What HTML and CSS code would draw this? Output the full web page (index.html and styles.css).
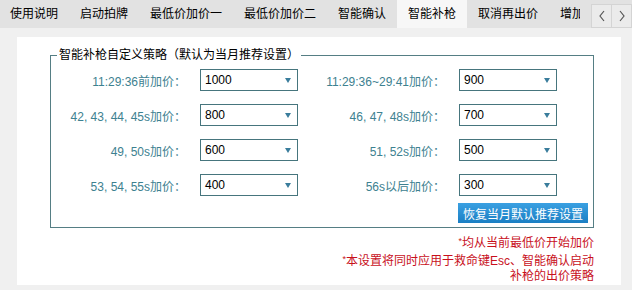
FILE: index.html
```html
<!DOCTYPE html>
<html lang="zh-CN">
<head>
  <meta charset="UTF-8" />
  <title>智能补枪</title>
  <link rel="stylesheet" href="styles.css">
</head>
<body>
  <div class="tabbar">
    <div class="tabs">
      <div class="tab">使用说明</div>
      <div class="tab">启动拍牌</div>
      <div class="tab">最低价加价一</div>
      <div class="tab">最低价加价二</div>
      <div class="tab">智能确认</div>
      <div class="tab active">智能补枪</div>
      <div class="tab">取消再出价</div>
      <div class="tab">增加出价</div>
    </div>
    <div class="arrows">
      <div class="arrow">
        <svg width="8" height="12" viewBox="0 0 8 12"><path d="M6 1 L2 6 L6 11" fill="none" stroke="#555" stroke-width="1.2"/></svg>
      </div>
      <div class="arrow">
        <svg width="8" height="12" viewBox="0 0 8 12"><path d="M2 1 L6 6 L2 11" fill="none" stroke="#555" stroke-width="1.2"/></svg>
      </div>
    </div>
  </div>

  <div class="panel">
    <fieldset class="strategy">
      <legend>智能补枪自定义策略（默认为当月推荐设置）</legend>
      <div class="grid">
        <label>11:29:36前加价：</label>
        <div class="combo"><span>1000</span><i class="caret"></i></div>
        <label>11:29:36~29:41加价：</label>
        <div class="combo"><span>900</span><i class="caret"></i></div>

        <label>42, 43, 44, 45s加价：</label>
        <div class="combo"><span>800</span><i class="caret"></i></div>
        <label>46, 47, 48s加价：</label>
        <div class="combo"><span>700</span><i class="caret"></i></div>

        <label>49, 50s加价：</label>
        <div class="combo"><span>600</span><i class="caret"></i></div>
        <label>51, 52s加价：</label>
        <div class="combo"><span>500</span><i class="caret"></i></div>

        <label>53, 54, 55s加价：</label>
        <div class="combo"><span>400</span><i class="caret"></i></div>
        <label>56s以后加价：</label>
        <div class="combo"><span>300</span><i class="caret"></i></div>
      </div>
      <div class="restore-row">
        <button class="btn">恢复当月默认推荐设置</button>
      </div>
    </fieldset>

    <div class="notes">
      <sup>*</sup>均从当前最低价开始加价<br>
      <sup>*</sup>本设置将同时应用于救命键Esc、智能确认启动<br>
      补枪的出价策略
    </div>
  </div>
</body>
</html>
```

FILE: styles.css
```css
body {
  margin: 0;
  background-color: #f0f0f0;
  font-family: "Liberation Sans", "Noto Sans CJK SC", sans-serif;
  font-size: 12px;
  color: #000;
}
.tabbar {
  display: flex;
  height: 28px;
  background-color: #e2e2e2;
}
.tabs {
  display: flex;
  flex: 1;
  overflow: hidden;
  white-space: nowrap;
  margin-right: 12px;
}
.tab {
  padding: 0 11px;
  line-height: 28px;
  font-size: 12px;
}
.tab:first-child {
  padding-left: 10px;
}
.tab.active {
  background-color: #f7f7f7;
  height: 30px;
}
.arrows {
  display: flex;
  padding-top: 4px;
}
.arrow {
  width: 19px;
  height: 22px;
  border: 1px solid #d4d4d4;
  background-color: #ebebeb;
  display: flex;
  align-items: center;
  justify-content: center;
  margin-left: -1px;
}
.panel {
  margin: 9px 11px 0 17px;
  height: 248px;
  background-color: #fff;
  overflow: hidden;
}
.strategy {
  margin: 10px 27px 0 33px;
  border: 1px solid #557e84;
  padding: 5px 0 4px 0;
  min-width: 0;
}
.strategy legend {
  margin-left: 6px;
  padding: 0 2px;
  line-height: 17px;
  font-size: 12px;
}
.grid {
  display: grid;
  grid-template-columns: 149px 98px 161px 98px;
  grid-auto-rows: 22px;
  row-gap: 13px;
  align-items: center;
}
.grid label {
  text-align: right;
  padding-right: 14px;
  color: #3d8190;
  white-space: nowrap;
}
.combo {
  height: 20px;
  border: 1px solid #46757d;
  display: flex;
  align-items: center;
  justify-content: space-between;
  padding: 0 6px 0 4px;
}
.caret {
  width: 0;
  height: 0;
  border-left: 3px solid transparent;
  border-right: 3px solid transparent;
  border-top: 5px solid #3a7d9c;
}
.restore-row {
  display: flex;
  justify-content: flex-end;
  padding-right: 5px;
  margin-top: 7px;
}
.btn {
  width: 130px;
  height: 20px;
  border: none;
  padding: 0;
  font-family: inherit;
  font-size: 12px;
  color: #fff;
  background: linear-gradient(#3aa0e2, #1b7fc4);
}
.notes {
  margin: 6px 27px 0 0;
  text-align: right;
  color: #c8101c;
  line-height: 15.5px;
}
.notes sup {
  font-size: 9px;
  vertical-align: 3px;
}
```
